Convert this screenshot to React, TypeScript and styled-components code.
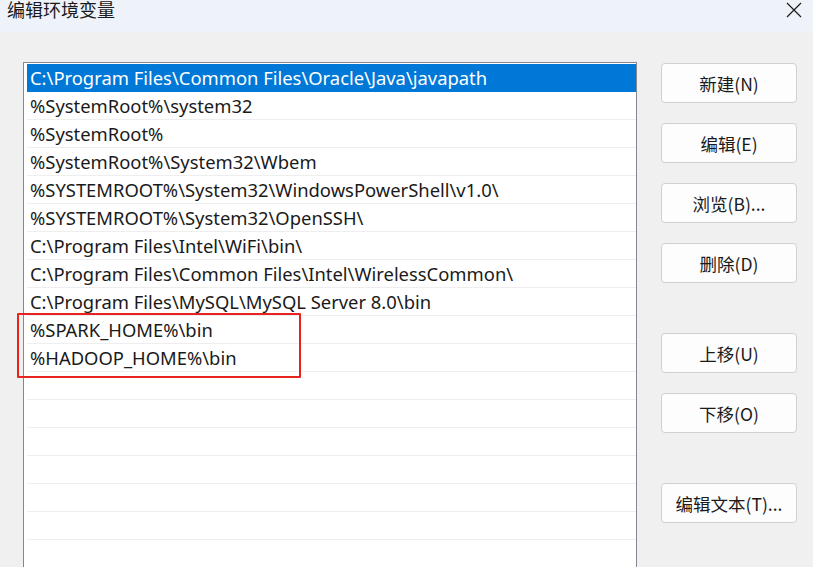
import styled, { createGlobalStyle } from "styled-components";

const GlobalStyle = createGlobalStyle`
  html, body {
    margin: 0;
    padding: 0;
    background: #f0f0f0;
  }
  body {
    font-family: "Noto Sans", "Noto Sans CJK SC", sans-serif;
    color: #1a1a1a;
  }
`;

const Window = styled.div`
  position: relative;
  width: 813px;
  height: 567px;
  overflow: hidden;
  background: #f0f0f0;
  display: flex;
  flex-direction: column;
`;

const TitleBar = styled.div`
  height: 32px;
  flex-shrink: 0;
  background: #eef3f9;
  display: flex;
  align-items: flex-start;
  justify-content: space-between;
  padding: 0 10px 0 7px;
`;

const Title = styled.span`
  font-family: "Noto Sans CJK SC", sans-serif;
  font-size: 18px;
  line-height: 18px;
  color: #1a1a1a;
`;

const CloseButton = styled.div`
  width: 18px;
  height: 18px;
  margin-top: 1px;
  display: flex;
  align-items: center;
  justify-content: center;
`;

const Body = styled.div`
  display: flex;
  align-items: flex-start;
  padding: 30px 0 0 23px;
  gap: 24px;
`;

const PathList = styled.div`
  width: 614px;
  height: 600px;
  flex-shrink: 0;
  background: #ffffff;
  border: 1px solid #828790;
  padding: 1px 0 0 3px;
  box-sizing: border-box;
  display: flex;
  flex-direction: column;
`;

const PathRow = styled.div<{ $selected?: boolean }>`
  height: 28px;
  flex-shrink: 0;
  box-sizing: border-box;
  padding-left: 3px;
  display: flex;
  align-items: center;
  font-size: 18.4px;
  white-space: nowrap;
  background: ${(p) => (p.$selected ? "#0078d7" : "transparent")};
  color: ${(p) => (p.$selected ? "#ffffff" : "#1a1a1a")};
  border-bottom: 1px solid ${(p) => (p.$selected ? "#0078d7" : "#eeeeee")};
`;

const ButtonColumn = styled.div`
  display: flex;
  flex-direction: column;
  gap: 20px;
  padding-top: 1px;
`;

const ActionButton = styled.button<{ $spaced?: boolean }>`
  width: 136px;
  height: 40px;
  margin-top: ${(p) => (p.$spaced ? "30px" : "0")};
  background: #fdfdfd;
  border: 1px solid #d0d0d0;
  border-radius: 4px;
  font-family: "Noto Sans CJK SC", "Noto Sans", sans-serif;
  font-size: 17.5px;
  color: #1a1a1a;
  padding: 0;
  cursor: default;
`;

const Highlight = styled.div`
  position: absolute;
  left: 17px;
  top: 313px;
  width: 284px;
  height: 65px;
  box-sizing: border-box;
  border: 2px solid #e8221e;
  border-radius: 1px;
  pointer-events: none;
`;

const paths = [
  "C:\\Program Files\\Common Files\\Oracle\\Java\\javapath",
  "%SystemRoot%\\system32",
  "%SystemRoot%",
  "%SystemRoot%\\System32\\Wbem",
  "%SYSTEMROOT%\\System32\\WindowsPowerShell\\v1.0\\",
  "%SYSTEMROOT%\\System32\\OpenSSH\\",
  "C:\\Program Files\\Intel\\WiFi\\bin\\",
  "C:\\Program Files\\Common Files\\Intel\\WirelessCommon\\",
  "C:\\Program Files\\MySQL\\MySQL Server 8.0\\bin",
  "%SPARK_HOME%\\bin",
  "%HADOOP_HOME%\\bin",
  "",
  "",
  "",
  "",
  "",
  "",
  "",
  "",
];

const buttons = [
  { label: "新建(N)" },
  { label: "编辑(E)" },
  { label: "浏览(B)..." },
  { label: "删除(D)" },
  { label: "上移(U)", spaced: true },
  { label: "下移(O)" },
  { label: "编辑文本(T)...", spaced: true },
];

export default function App() {
  return (
    <Window>
      <GlobalStyle />
      <TitleBar>
        <Title>编辑环境变量</Title>
        <CloseButton>
          <svg width="16" height="16" viewBox="0 0 16 16">
            <path d="M1 1 L15 15 M15 1 L1 15" stroke="#1a1a1a" strokeWidth="1.2" />
          </svg>
        </CloseButton>
      </TitleBar>
      <Body>
        <PathList>
          {paths.map((p, i) => (
            <PathRow key={i} $selected={i === 0}>
              {p}
            </PathRow>
          ))}
        </PathList>
        <ButtonColumn>
          {buttons.map((b) => (
            <ActionButton key={b.label} $spaced={b.spaced}>
              {b.label}
            </ActionButton>
          ))}
        </ButtonColumn>
      </Body>
      <Highlight />
    </Window>
  );
}
